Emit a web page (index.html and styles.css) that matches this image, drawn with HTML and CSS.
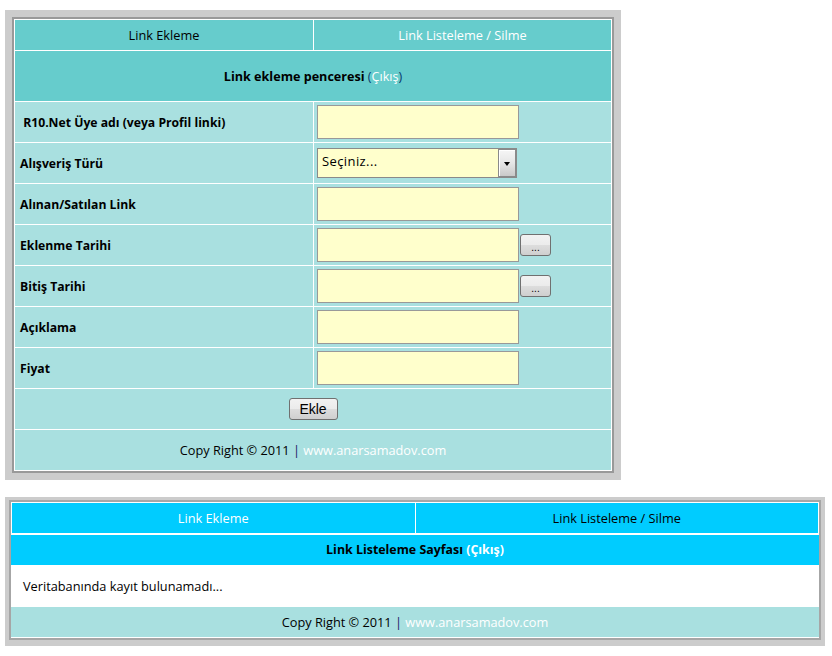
FILE: index.html
```html
<!DOCTYPE html>
<html lang="tr">
<head>
<meta charset="utf-8">
<title>Link Ekleme</title>
<link rel="stylesheet" href="styles.css">
</head>
<body>
<div class="page">
  <div class="panel panel-add">
    <table class="form-table">
      <colgroup><col class="col-left"><col class="col-right"></colgroup>
      <tr class="tabs">
        <td class="tab">Link Ekleme</td>
        <td class="tab"><a href="#">Link Listeleme / Silme</a></td>
      </tr>
      <tr class="title">
        <td colspan="2"><b>Link ekleme penceresi</b> <span class="paren">(<a href="#">Çıkış</a>)</span></td>
      </tr>
      <tr class="row">
        <td class="label">&nbsp;R10.Net Üye adı (veya Profil linki)</td>
        <td class="field"><input class="text-input" type="text"></td>
      </tr>
      <tr class="row">
        <td class="label">Alışveriş Türü</td>
        <td class="field">
          <div class="select-box">
            <select class="select"><option>Seçiniz...</option></select>
            <span class="select-arrow"><span class="triangle"></span></span>
          </div>
        </td>
      </tr>
      <tr class="row">
        <td class="label">Alınan/Satılan Link</td>
        <td class="field"><input class="text-input" type="text"></td>
      </tr>
      <tr class="row">
        <td class="label">Eklenme Tarihi</td>
        <td class="field"><div class="with-btn"><input class="text-input" type="text"><button class="btn btn-date" type="button">...</button></div></td>
      </tr>
      <tr class="row">
        <td class="label">Bitiş Tarihi</td>
        <td class="field"><div class="with-btn"><input class="text-input" type="text"><button class="btn btn-date" type="button">...</button></div></td>
      </tr>
      <tr class="row">
        <td class="label">Açıklama</td>
        <td class="field"><input class="text-input" type="text"></td>
      </tr>
      <tr class="row">
        <td class="label">Fiyat</td>
        <td class="field"><input class="text-input" type="text"></td>
      </tr>
      <tr class="row">
        <td class="submit-cell" colspan="2"><button class="btn btn-submit" type="submit">Ekle</button></td>
      </tr>
      <tr class="row">
        <td class="footer-cell" colspan="2">Copy Right © 2011 <span class="sep">|</span> <a href="#">www.anarsamadov.com</a></td>
      </tr>
    </table>
  </div>

  <div class="panel panel-list">
    <div class="list-box">
      <table class="list-tabs">
        <tr>
          <td><a href="#">Link Ekleme</a></td>
          <td>Link Listeleme / Silme</td>
        </tr>
      </table>
      <div class="list-title"><b>Link Listeleme Sayfası <a href="#">(Çıkış)</a></b></div>
      <div class="list-body">Veritabanında kayıt bulunamadı...</div>
      <div class="list-footer">Copy Right © 2011 <span class="sep">|</span> <a href="#">www.anarsamadov.com</a></div>
    </div>
  </div>
</div>
</body>
</html>
```

FILE: styles.css
```css
* { box-sizing: border-box; }

body {
  margin: 0;
  font-family: "Open Sans", "Noto Sans", sans-serif;
  font-size: 12.75px;
  color: #000;
  background: #fff;
}

a { color: #fff; text-decoration: none; }

.page {
  display: flex;
  flex-direction: column;
  align-items: flex-start;
  gap: 17px;
  padding: 10px 0 0 5px;
}

.panel { background: #ccc; }
.panel-add { padding: 7px; }

.form-table {
  width: 602px;
  table-layout: fixed;
  border: 2px solid #999;
  border-spacing: 1px;
  background: #fff;
  font-size: 12.75px;
}
.col-left { width: 298px; }
.col-right { width: 297px; }

.form-table td { padding: 0 3px; vertical-align: middle; }

.tabs td {
  height: 30px;
  background: #66cccc;
  text-align: center;
}

.title td {
  height: 50px;
  background: #66cccc;
  text-align: center;
  font-size: 12.6px;
}
.paren { color: #0a3a6e; }

.row td {
  height: 40px;
  background: #a9e0e0;
}
.row td.label {
  font-weight: bold;
  font-size: 12.2px;
  padding-left: 5px;
}

.text-input {
  display: block;
  width: 202px;
  height: 34px;
  border: 1px solid #999;
  background: #ffffcc;
  padding: 0 4px;
  font: inherit;
}

.with-btn { display: flex; align-items: center; gap: 1px; }

.select-box {
  display: flex;
  width: 200px;
  height: 30px;
  border: 1px solid #8a8a8a;
  background: #ffffcc;
}
.select {
  flex: 1;
  min-width: 0;
  appearance: none;
  -webkit-appearance: none;
  border: none;
  background: transparent;
  font-family: inherit;
  font-size: 13px;
  letter-spacing: 0.4px;
  padding: 0 0 4px 4px;
  outline: none;
  color: #000;
}
.select-arrow {
  width: 18px;
  display: flex;
  align-items: center;
  justify-content: center;
  border: 1px solid #8a8a8a;
  box-shadow: inset 1px 1px 0 #fff;
  background: linear-gradient(#f6f6f6, #e6e6e6 50%, #c9c9c9);
}
.triangle {
  width: 0;
  height: 0;
  border-left: 3.5px solid transparent;
  border-right: 3.5px solid transparent;
  border-top: 4px solid #000;
  margin-top: 1px;
}

.btn {
  font-family: "Liberation Sans", Arial, sans-serif;
  color: #000;
  border: 1px solid #707070;
  border-radius: 3px;
  background: linear-gradient(#f2f2f2 0%, #ebebeb 50%, #dddddd 50%, #cfcfcf 100%);
  padding: 0;
}
.btn-date {
  width: 31px;
  height: 22px;
  font-size: 10px;
  line-height: 20px;
  padding-top: 3px;
}
.btn-submit {
  width: 49px;
  height: 22px;
  font-size: 14px;
}

.submit-cell { text-align: center; }
.footer-cell { text-align: center; }
.sep { color: #1a1a66; }

/* list panel */
.panel-list { padding: 3px 4px 6px; }

.list-box {
  width: 812px;
  border: 2px solid #a6a6a6;
  background: #fff;
  padding-bottom: 1px;
}
.list-tabs {
  width: 100%;
  table-layout: fixed;
  border-spacing: 1px;
  margin-bottom: 1px;
  font-size: 12.75px;
}
.list-tabs td {
  height: 30px;
  padding: 0;
  background: #00ccff;
  text-align: center;
}
.list-title {
  height: 30px;
  line-height: 30px;
  background: #00ccff;
  text-align: center;
  font-size: 12.4px;
}
.list-body {
  height: 42px;
  line-height: 42px;
  padding-left: 12px;
}
.list-footer {
  height: 30px;
  line-height: 30px;
  background: #a9e0e0;
  text-align: center;
}
```
